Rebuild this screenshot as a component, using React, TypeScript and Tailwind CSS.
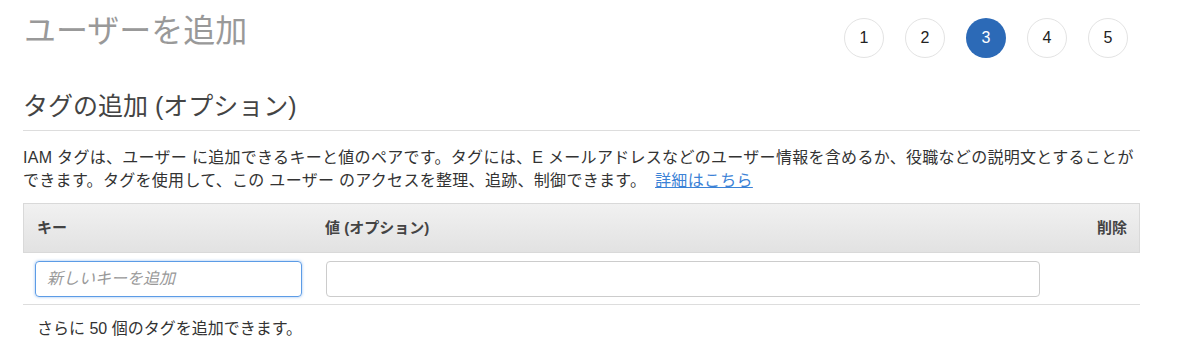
const steps = [1, 2, 3, 4, 5];
const current = 3;

const App: React.FC = () => {
  return (
    <div
      className="w-[1200px] h-[358px] bg-white px-[23px] text-[#333]"
      style={{ fontFamily: '"Liberation Sans", "Noto Sans CJK JP", sans-serif' }}
    >
      <div className="w-[1117px]">
        {/* header */}
        <div className="flex items-start justify-between pt-[12px]">
          <h1 className="text-[32px] leading-[38px] text-[#999] font-normal pl-[1px]">
            ユーザーを追加
          </h1>
          <div className="flex gap-[21px] pt-[6px] pr-[12px]">
            {steps.map((s) =>
              s === current ? (
                <div
                  key={s}
                  className="w-[40px] h-[40px] rounded-full bg-[#2c6ab7] text-white flex items-center justify-center text-[16px]"
                >
                  {s}
                </div>
              ) : (
                <div
                  key={s}
                  className="w-[40px] h-[40px] rounded-full border border-[#e3e3e3] text-[#222] flex items-center justify-center text-[16px]"
                >
                  {s}
                </div>
              )
            )}
          </div>
        </div>

        {/* section title */}
        <h2 className="mt-[33px] text-[25px] leading-[30px] text-[#444] pb-[9px] border-b border-[#ddd]">
          タグの追加 (オプション)
        </h2>

        <p className="mt-[15px] text-[16px] leading-[23px] tracking-[0.3px] text-[#333] whitespace-nowrap">
          IAM タグは、ユーザー に追加できるキーと値のペアです。タグには、E
          メールアドレスなどのユーザー情報を含めるか、役職などの説明文とすることが
          <br />
          できます。タグを使用して、この ユーザー のアクセスを整理、追跡、制御できます。{" "}
          <a href="#" className="text-[#3b82d6] underline ml-[4px]">
            詳細はこちら
          </a>
        </p>

        {/* table */}
        <div className="mt-[11px]">
          <div className="h-[50px] flex items-center border border-[#d9d9d9] bg-gradient-to-b from-[#f1f1f1] to-[#e2e2e2] text-[15px] font-bold text-[#444]">
            <div className="w-[289px] pl-[13px]">キー</div>
            <div className="flex-1 pl-[12px]">値 (オプション)</div>
            <div className="pr-[12px]">削除</div>
          </div>
          <div className="flex items-center h-[52px] border-b border-[#ddd] pl-[12px]">
            <input
              className="w-[267px] h-[36px] rounded-[4px] border border-[#5c9ce6] shadow-[0_0_3px_rgba(82,150,230,0.6)] px-[11px] text-[16px] italic outline-none placeholder:text-[#999]"
              placeholder="新しいキーを追加"
              autoFocus
            />
            <input className="ml-[24px] w-[714px] h-[36px] rounded-[4px] border border-[#ccc] px-[11px] text-[16px] outline-none" />
          </div>
          <p className="mt-[13px] pl-[14px] text-[16px] leading-[22px] text-[#333]">
            さらに 50 個のタグを追加できます。
          </p>
        </div>
      </div>
    </div>
  );
};

export default App;
